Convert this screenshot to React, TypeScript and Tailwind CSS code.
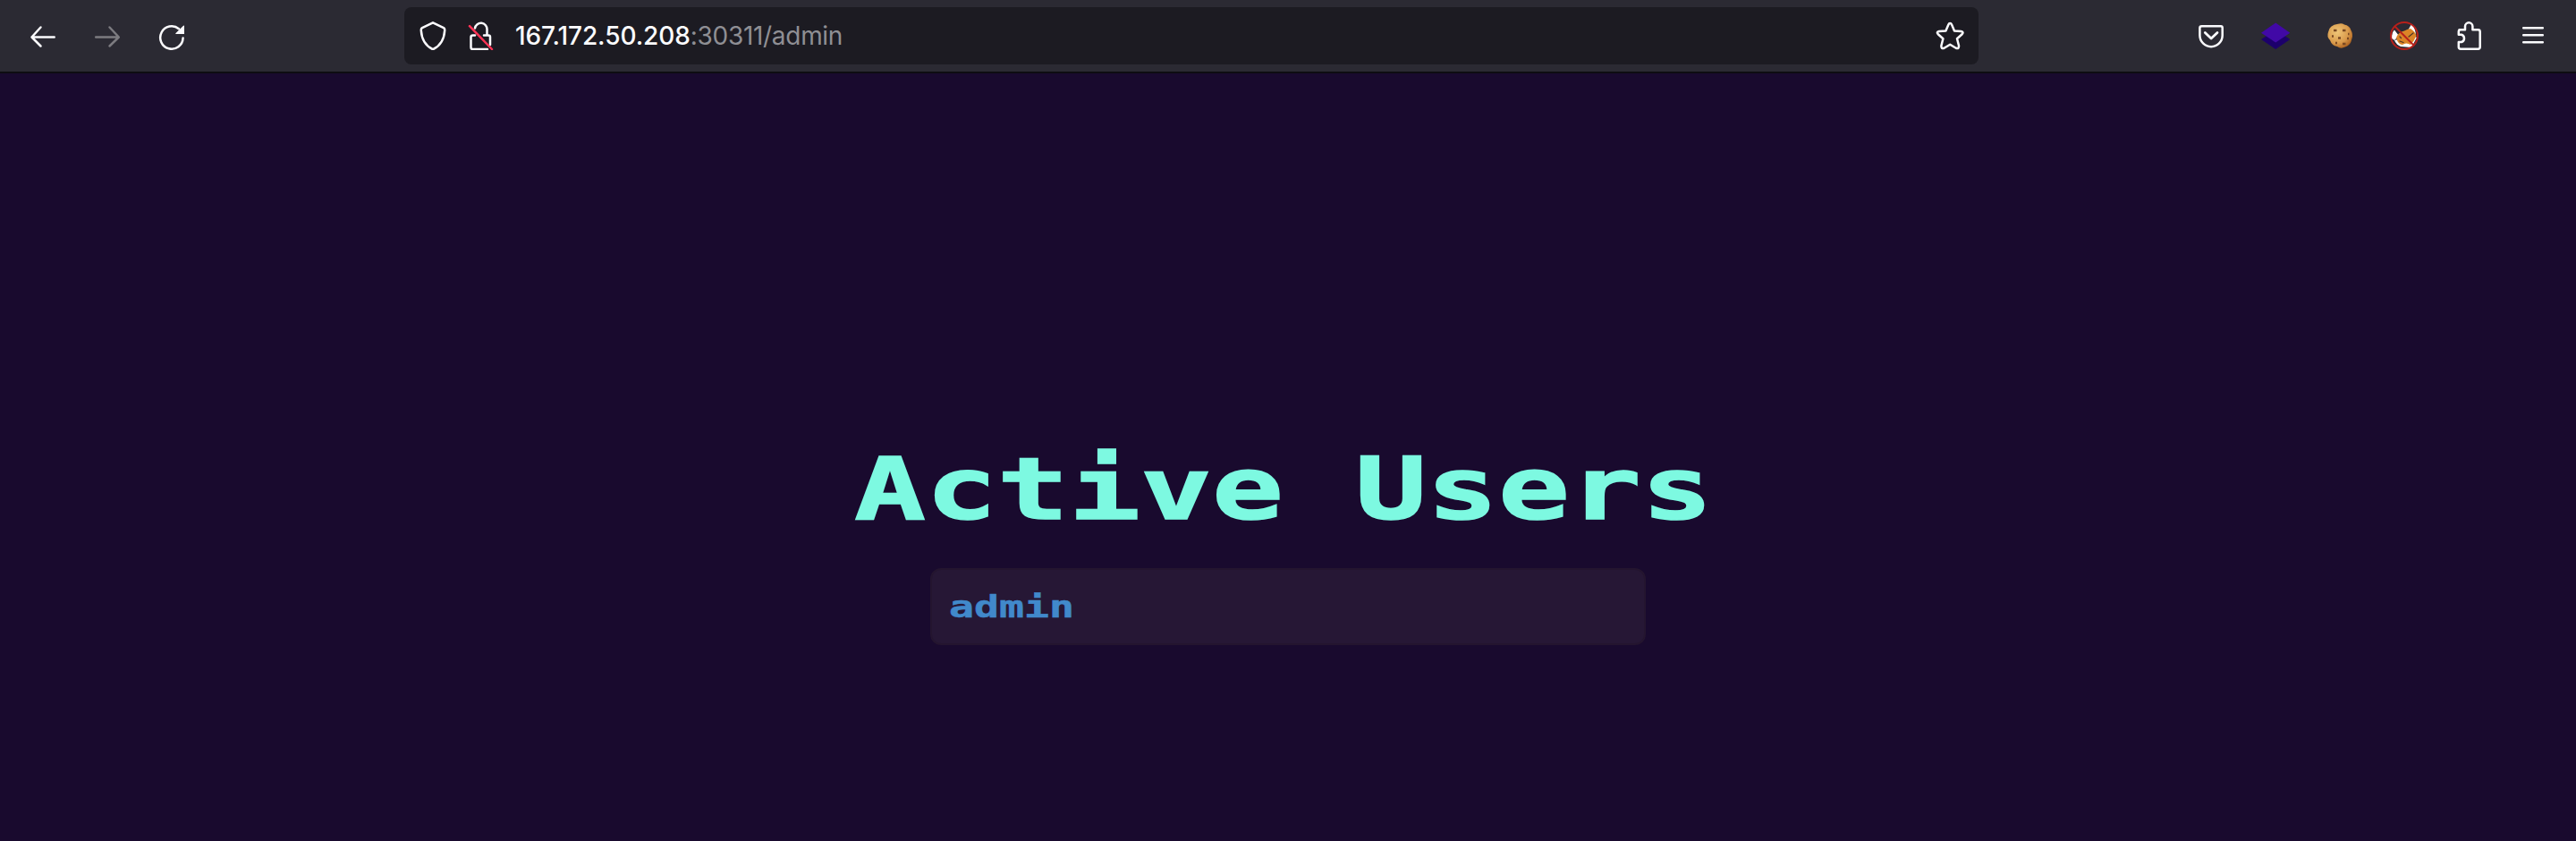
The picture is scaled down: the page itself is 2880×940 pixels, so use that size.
import React from "react";

type IconProps = { className?: string; children: React.ReactNode };

function Icon({ className = "", children }: IconProps) {
  return (
    <svg
      viewBox="0 0 32 32"
      className={`size-8 shrink-0 ${className}`}
      fill="none"
      stroke="currentColor"
      strokeWidth="2.5"
      strokeLinecap="round"
      strokeLinejoin="round"
    >
      {children}
    </svg>
  );
}

function Toolbar() {
  return (
    <header className="flex h-20 items-center bg-[#2b2a33] text-[#fbfbfe]">
      <nav className="flex w-[452px] shrink-0 items-center gap-10 pl-8">
        <Icon>
          <path d="M3.5 17.5H28.7M13.5 6.5L3.5 17.5L13.5 27.5" />
        </Icon>
        <Icon className="text-[#7c7b80]">
          <path d="M3.2 17.5H28.5M18.5 6.5L28.8 17.5L18.5 27.5" />
        </Icon>
        <Icon>
          <path d="M28.6 18.5A12.7 12.7 0 1 1 24 8.2" />
          <path d="M30 4.4V14H20.3Q20 13.5 20.8 12.8L29 4.7Z" fill="currentColor" stroke="none" />
        </Icon>
      </nav>
      <div className="flex h-16 w-[1760px] shrink-0 items-center rounded-lg bg-[#1c1b22] pr-4 pl-4">
        <Icon>
          <path d="M16 1.3L28 7.2Q29.4 8 29.2 10Q28.3 25.4 16 31.2Q3.7 25.4 2.8 10Q2.6 8 4 7.2Z" />
        </Icon>
        <Icon className="ml-[22px]">
          <path d="M9 7.5A6.8 6.8 0 0 1 22.5 9V15.5M9 15.5H6.5Q4.5 15.5 4.500 17.500V29Q4.500 31 6.500 31H23M19 15.500H24Q26 15.500 26 17.500V26" />
          <path d="M3 5.200L28 31" stroke="#ff3355" />
        </Icon>
        <div className="ml-[22px] grow font-['Inter',sans-serif] text-[28px] leading-[34px] tracking-[-0.3px] whitespace-pre text-[#8f8f94]">
          <span className="font-medium tracking-[-0.08px] text-[#fbfbfe]">167.172.50.208</span>:30311/admin
        </div>
        <Icon>
          <path d="M16.200 1.900Q17.400 1.900 18 3.400L21 10.500L28.500 11Q31.800 11.700 29.600 14.200L24 19.200L26 27Q26.300 31 22.800 29.800L16.200 25.800L9.600 29.800Q6.100 31 6.400 27L8.400 19.200L2.800 14.200Q.6 11.700 3.900 11L11.400 10.500L14.400 3.400Q15 1.900 16.200 1.900Z" />
        </Icon>
      </div>
      <div className="flex grow items-center justify-end gap-10 pr-8">
        <Icon>
          <path d="M5.5 5.3H27Q28.7 5.3 28.7 7V15.5A12.6 12.6 0 0 1 3.4 15.5V7Q3.4 5.3 5.5 5.3Z" />
          <path d="M9.3 12.5L16.1 19L23 12.5" strokeWidth="2.8" />
        </Icon>
        <Icon>
          <path d="M0 20L16.2 9.5L32.3 20L16.2 31Z" fill="#1c006b" stroke="none" />
          <path d="M0 12.7L16.2 1.5L32.3 12.7L16.2 23.5Z" fill="#4109a6" stroke="none" />
        </Icon>
        <Icon>
          <defs>
            <radialGradient id="cookie" cx=".38" cy=".35" r=".7">
              <stop offset="0" stopColor="#efc678" />
              <stop offset=".65" stopColor="#d99a4b" />
              <stop offset="1" stopColor="#ad621f" />
            </radialGradient>
          </defs>
          <path d="M14 2.8Q18 1.5 21 3.5Q27 4.5 28.5 10Q31 14 29.5 19Q28 27 22 28.5Q17 31 13 28Q7 27 5 21Q1 17 3 12Q4 4 14 2.8Z" fill="url(#cookie)" stroke="none" />
          <path d="M9 10h3.500M19 10h3.500M7 16.500h2M14 18.500h3M24 19h2M19 25h3.500M11 24h2M25 14h1.500" stroke="#7b4a23" strokeWidth="2.700" strokeLinecap="butt" />
        </Icon>
        <Icon>
          <circle cx="16" cy="16" r="15" fill="#2b2a33" stroke="none" />
          <path d="M2 19Q2 12 5 9.500L10 16L5 21ZM20 10L24 3Q27 4 29 14Z" fill="#fff" stroke="none" />
          <path d="M5 21Q7 26 12 28L24 29L30 18L27 16Z" fill="#fff" stroke="none" />
          <path d="M7 18Q9 12 16 10.500Q20 8 23 8Q28 11 29.500 16Q27 22 23 26Q18 23 14 26Q9 26 7 18Z" fill="#db8527" stroke="none" />
          <path d="M11 22l4 1.500M21 17l5-4M11 17l1.500 1.500" stroke="#503728" strokeWidth="1.300" />
          <circle cx="16" cy="16" r="15" stroke="#b7201b" strokeWidth="2" />
          <path d="M5.500 5.500L26.500 26.500" stroke="#b7201b" strokeWidth="2" />
        </Icon>
        <Icon>
          <path d="M5.500 9.200H12V5.500A4.200 4.200 0 0 1 20.400 5.500V9.200H26.500Q28.700 9.200 28.700 11.400V28.500Q28.700 30.700 26.500 30.700H7Q4.800 30.700 4.800 28.500V23H8A4.300 4.300 0 0 0 8 14.800H4.800V11.400Q4.800 9.200 7 9.200" />
        </Icon>
        <Icon>
          <path d="M5.200 7.300H26.800M5.200 15.300H26.800M5.200 23.300H26.800" />
        </Icon>
      </div>
    </header>
  );
}

export default function App() {
  return (
    <div className="flex h-[940px] w-[2880px] flex-col overflow-hidden bg-[#190a2e]">
      <Toolbar />
      <div className="h-0.5 shrink-0 bg-[#0e0d12]" />
      <main className="flex grow flex-col items-center pt-[405px] font-['DejaVu_Sans_Mono',monospace] font-bold">
        <h1 className="mr-[10px] h-[120px] w-[960px] text-[97px] leading-[120px] whitespace-pre text-[#7df9e1] [-webkit-text-stroke:1.5px_#7df9e1]">
          <span className="inline-block origin-left scale-x-[1.37]">Active Users</span>
        </h1>
        <ul className="mt-[28px] w-[800px]">
          <li className="flex h-[86px] items-center rounded-xl border-2 border-[#24152f] bg-[#261735] pl-[19px] text-[34.5px] leading-10 text-[#4189cb] [-webkit-text-stroke:0.5px_#4189cb]">
            <span className="inline-block origin-left scale-x-[1.348]">admin</span>
          </li>
        </ul>
      </main>
    </div>
  );
}
